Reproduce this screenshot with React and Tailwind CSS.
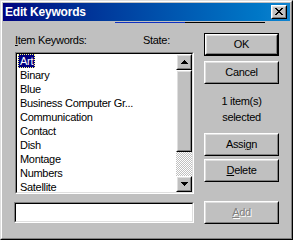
import React from 'react';

const keywords = [
  'Art',
  'Binary',
  'Blue',
  'Business Computer Gr...',
  'Communication',
  'Contact',
  'Dish',
  'Montage',
  'Numbers',
  'Satellite',
];

// classic raised 3D frame (buttons, scrollbar parts)
function Raised({ className = '', children }) {
  return (
    <div className={`border border-t-white border-l-white border-r-black border-b-black ${className}`}>
      <div className="w-full h-full border border-t-[#dfdfdf] border-l-[#dfdfdf] border-r-[#808080] border-b-[#808080] bg-[#c0c0c0] flex items-center justify-center">
        {children}
      </div>
    </div>
  );
}

// classic sunken 3D frame (list, edit box)
function Sunken({ className = '', children }) {
  return (
    <div className={`border border-t-[#808080] border-l-[#808080] border-r-white border-b-white ${className}`}>
      <div className="w-full h-full border border-t-black border-l-black border-r-[#dfdfdf] border-b-[#dfdfdf] bg-white flex">
        {children}
      </div>
    </div>
  );
}

function Button({ children, isDefault, disabled }) {
  const label = (
    <span className={disabled ? 'text-[#808080] [text-shadow:1px_1px_0_#fff]' : 'text-black'}>
      {children}
    </span>
  );
  if (isDefault) {
    return (
      <div className="w-[75px] h-[23px] border border-black">
        <Raised className="w-full h-full">{label}</Raised>
      </div>
    );
  }
  return <Raised className="w-[75px] h-[23px]">{label}</Raised>;
}

function Arrow({ down }) {
  return (
    <svg width="7" height="4" viewBox="0 0 7 4" shapeRendering="crispEdges" className={down ? 'rotate-180' : ''}>
      <path d="M3 0h1v1H3zM2 1h3v1H2zM1 2h5v1H1zM0 3h7v1H0z" fill="#000" />
    </svg>
  );
}

export default function App() {
  return (
    <div className="w-[293px] h-[240px] font-['Liberation_Sans',Arial,sans-serif] text-[11px] tracking-[-0.3px] text-black select-none">
      <div className="w-full h-full border border-t-[#dfdfdf] border-l-[#dfdfdf] border-r-black border-b-black">
        <div className="w-full h-full border border-t-white border-l-white border-r-[#808080] border-b-[#808080] bg-[#c0c0c0] p-px flex flex-col">
          {/* Title bar */}
          <div className="h-[18px] flex items-center bg-gradient-to-r from-[#000080] to-[#1084d0] pl-[2px] pr-[3px]">
            <span className="flex-1 text-white font-bold text-[12px] tracking-[-0.2px] leading-none">Edit Keywords</span>
            <Raised className="w-[16px] h-[14px]">
              <svg width="8" height="7" viewBox="0 0 8 7" shapeRendering="crispEdges" className="-mt-px -ml-px">
                <path
                  d="M0 0h2v1H0zM6 0h2v1H6zM1 1h2v1H1zM5 1h2v1H5zM2 2h4v1H2zM3 3h2v1H3zM2 4h4v1H2zM1 5h2v1H1zM5 5h2v1H5zM0 6h2v1H0zM6 6h2v1H6z"
                  fill="#000"
                />
              </svg>
            </Raised>
          </div>
          <div className="h-px" />
          <div className="h-px flex">
            <div className="ml-[112px] w-[70px] bg-[#1030c0]" />
            <div className="w-[80px] bg-black" />
          </div>

          {/* Body */}
          <div className="flex pl-[12px]">
            <div className="w-[179px] flex flex-col">
              <div className="mt-[11px] h-[13px] leading-[13px] flex">
                <span className="w-[128px]">
                  <span className="underline">I</span>tem Keywords:
                </span>
                <span>State:</span>
              </div>
              <Sunken className="mt-[5px] w-[179px] h-[142px]">
                <div className="flex-1 overflow-hidden">
                  {keywords.map((k, i) => (
                    <div key={k} className="h-[14px] pl-px flex">
                      <span
                        className={
                          i === 0
                            ? 'border border-dotted border-[#ffff7f] bg-[#000080] text-white px-px leading-[12px]'
                            : 'border border-transparent px-px leading-[12px] whitespace-nowrap'
                        }
                      >
                        {k}
                      </span>
                    </div>
                  ))}
                </div>
                <div className="w-[16px] flex flex-col">
                  <Raised className="w-[16px] h-[16px]">
                    <Arrow />
                  </Raised>
                  <Raised className="w-[16px] h-[82px]" />
                  <div className="h-[24px] bg-[repeating-conic-gradient(#c0c0c0_0%_25%,#ffffff_0%_50%)] bg-[length:2px_2px]" />
                  <Raised className="w-[16px] h-[16px]">
                    <Arrow down />
                  </Raised>
                </div>
              </Sunken>
              <Sunken className="mt-[8px] -ml-px w-[180px] h-[21px]" />
            </div>

            <div className="ml-[10px] mt-[10px] flex flex-col items-center">
              <Button isDefault>OK</Button>
              <div className="mt-[5px]">
                <Button>Cancel</Button>
              </div>
              <div className="mt-[9px] text-center leading-[16px]">
                <div>1 item(s)</div>
                <div>selected</div>
              </div>
              <div className="mt-[8px]">
                <Button>
                  Assi<span className="underline">g</span>n
                </Button>
              </div>
              <div className="mt-[3px]">
                <Button>
                  <span className="underline">D</span>elete
                </Button>
              </div>
              <div className="mt-[19px]">
                <Button disabled>
                  <span className="underline">A</span>dd
                </Button>
              </div>
            </div>
          </div>
        </div>
      </div>
    </div>
  );
}
